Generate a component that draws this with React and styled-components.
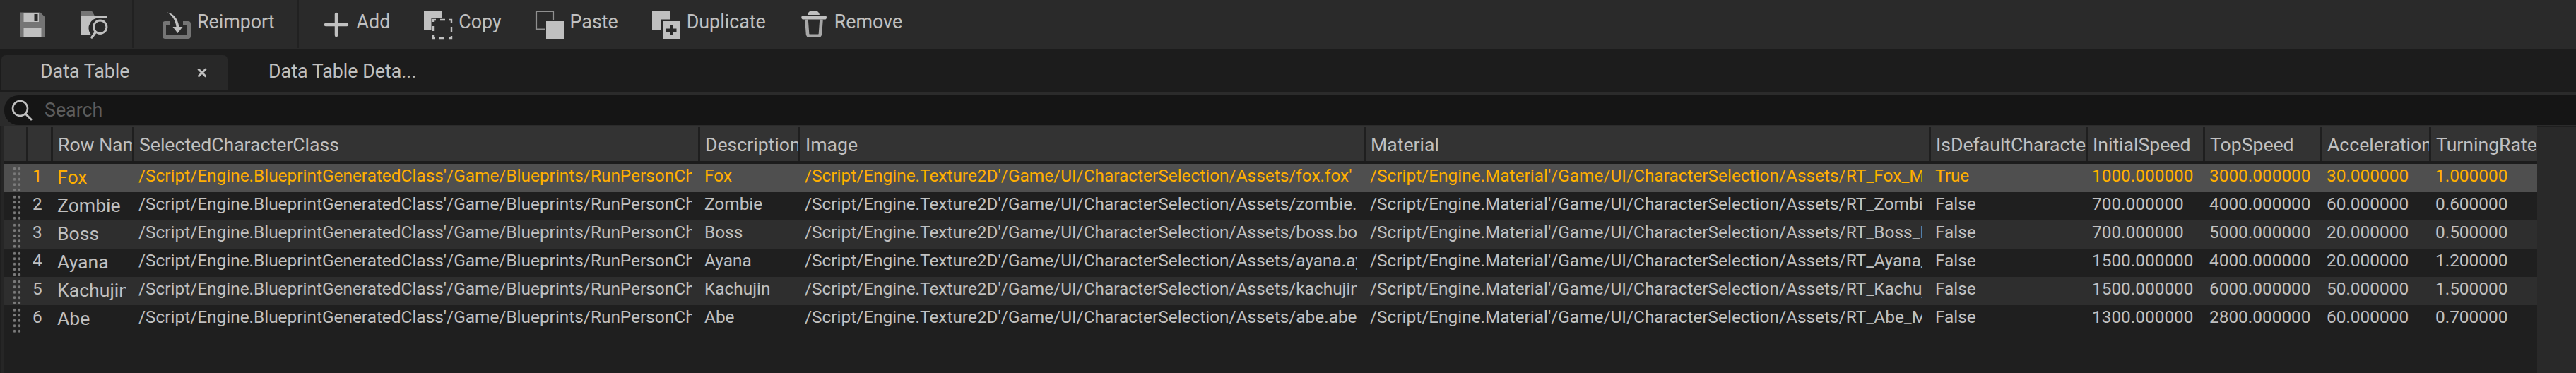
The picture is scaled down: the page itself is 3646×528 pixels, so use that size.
import React from 'react'
import styled, { createGlobalStyle } from 'styled-components'

const COLUMNS = '34px 35px 115px 801px 142px 800px 800px 222px 166px 166px 154px 150px'

const selectedClass = "/Script/Engine.BlueprintGeneratedClass'/Game/Blueprints/RunPersonCharacter.RunPersonCharacter_C'"
const imagePath = (n) => `/Script/Engine.Texture2D'/Game/UI/CharacterSelection/Assets/${n}.${n}'`
const materialPath = (n) => `/Script/Engine.Material'/Game/UI/CharacterSelection/Assets/RT_${n}_Mat.RT_${n}_Mat'`

const rows = [
    ['Fox', 'fox', 'Fox', 'True', '1000.000000', '3000.000000', '30.000000', '1.000000'],
    ['Zombie', 'zombie', 'Zombie', 'False', '700.000000', '4000.000000', '60.000000', '0.600000'],
    ['Boss', 'boss', 'Boss', 'False', '700.000000', '5000.000000', '20.000000', '0.500000'],
    ['Ayana', 'ayana', 'Ayana', 'False', '1500.000000', '4000.000000', '20.000000', '1.200000'],
    ['Kachujin', 'kachujin', 'Kachujin', 'False', '1500.000000', '6000.000000', '50.000000', '1.500000'],
    ['Abe', 'abe', 'Abe', 'False', '1300.000000', '2800.000000', '60.000000', '0.700000'],
]

const headers = ['', '', 'Row Name', 'SelectedCharacterClass', 'Description', 'Image', 'Material', 'IsDefaultCharacter', 'InitialSpeed', 'TopSpeed', 'Acceleration', 'TurningRate']

const LIGHT = '#c0c0c0'
const DIM = '#757575'
const BAR = '#2a2a2a'

const SaveIcon = () => (
    <Icon viewBox="0 0 40 40">
        <path d="M2.5 2.5H31L37.5 9V37.5H2.5Z" fill={DIM} />
        <rect x="7.5" y="3" width="21.5" height="13" fill={LIGHT} />
        <rect x="22.5" y="5" width="5" height="10" fill="#2a2a2a" />
        <rect x="7.5" y="24.5" width="25" height="12.5" fill={LIGHT} />
    </Icon>
)

const BrowseIcon = () => (
    <Icon viewBox="0 0 40 40">
        <path d="M0 7.5V2Q0 0 2 0H14Q16 0 17 2L20 7.5Z" fill={DIM} />
        <path d="M0 7.5H38V10.5H27A14.5 14.5 0 0 0 14 33L15 35H2Q0 35 0 33Z" fill={LIGHT} />
        <circle cx="27.7" cy="23.3" r="9.2" fill="none" stroke={LIGHT} strokeWidth="3" />
        <path d="M21 31L16 38" stroke={LIGHT} strokeWidth="3.4" strokeLinecap="round" />
    </Icon>
)

const ReimportIcon = () => (
    <Icon viewBox="0 0 40 40">
        <path d="M11 17.5H4Q2.5 17.5 2.5 19V36Q2.5 37.5 4 37.5H36Q37.5 37.5 37.5 36V19Q37.5 17.5 36 17.5H29" fill="none" stroke={DIM} strokeWidth="5" />
        <path d="M6.5 2.5C15 4 21.5 10 23.5 23H28.5L21.5 32L14.5 23H19.5C18.5 14 14 7 6.5 2.5Z" fill={LIGHT} />
    </Icon>
)

const AddIcon = () => (
    <Icon viewBox="0 0 40 40">
        <path d="M20 5V35M5 20H35" stroke={LIGHT} strokeWidth="4.5" strokeLinecap="round" />
    </Icon>
)

const CopyIcon = () => (
    <Icon viewBox="0 0 40 40">
        <rect x="0" y="0" width="25" height="27" fill={LIGHT} />
        <rect x="10.5" y="10.5" width="29.5" height="29.5" fill={BAR} />
        <rect x="13" y="13" width="26" height="26" fill="none" stroke={LIGHT} strokeWidth="2.4" strokeDasharray="7 6" strokeDashoffset="3" />
    </Icon>
)

const PasteIcon = () => (
    <Icon viewBox="0 0 40 40">
        <path d="M25 14V1H1V26.5H14" fill="none" stroke="#8f8f8f" strokeWidth="2.2" />
        <rect x="15" y="15" width="25" height="25" fill={LIGHT} />
    </Icon>
)

const DuplicateIcon = () => (
    <Icon viewBox="0 0 40 40">
        <rect x="0" y="0" width="25" height="27" fill={LIGHT} />
        <rect x="12.5" y="12.5" width="27.5" height="27.5" fill={BAR} />
        <rect x="15" y="15" width="25" height="25" fill={LIGHT} />
        <path d="M27.3 20.5V35M20 27.7H34.5" stroke={BAR} strokeWidth="4.6" />
    </Icon>
)

const TrashIcon = () => (
    <Icon viewBox="0 0 40 40">
        <path d="M11 6Q11.5 0 19.5 0Q27.5 0 28 6Z" fill={LIGHT} />
        <rect x="2.3" y="7" width="35.7" height="5.6" rx="2.8" fill={LIGHT} />
        <path d="M9.5 12.5L11 33Q11.2 35.7 14 35.7H26Q28.8 35.7 29 33L30.5 12.5" fill="none" stroke="#a8a8a8" strokeWidth="4.6" />
    </Icon>
)

const Tools = [
    ['Add', AddIcon],
    ['Copy', CopyIcon],
    ['Paste', PasteIcon],
    ['Duplicate', DuplicateIcon],
    ['Remove', TrashIcon],
]

function App() {
    return (
        <Page>
            <GlobalStyle />
            <Toolbar>
                <ToolGroup $left={26} $right={33}>
                    <ToolButton><SaveIcon /></ToolButton>
                    <ToolButton><BrowseIcon /></ToolButton>
                </ToolGroup>
                <Divider />
                <ToolGroup $left={40} $right={31}>
                    <ToolButton><ReimportIcon /><span>Reimport</span></ToolButton>
                </ToolGroup>
                <Divider />
                <ToolGroup $left={33} $right={0}>
                    {Tools.map(([label, Glyph]) => (
                        <ToolButton key={label}><Glyph /><span>{label}</span></ToolButton>
                    ))}
                </ToolGroup>
            </Toolbar>

            <TabStrip>
                <Tab $active>
                    <span>Data Table</span>
                    <CloseIcon viewBox="0 0 14 14">
                        <path d="M1.5 1.5L12.5 12.5M12.5 1.5L1.5 12.5" stroke={LIGHT} strokeWidth="3" />
                    </CloseIcon>
                </Tab>
                <Tab>Data Table Deta...</Tab>
            </TabStrip>

            <SearchRow>
                <SearchBox>
                    <SearchIcon viewBox="0 0 30 30">
                        <circle cx="12.5" cy="12.5" r="10.5" fill="none" stroke={LIGHT} strokeWidth="2.6" />
                        <path d="M20 20L28 28" stroke={LIGHT} strokeWidth="3" strokeLinecap="round" />
                    </SearchIcon>
                    <SearchText>Search</SearchText>
                </SearchBox>
            </SearchRow>

            <TableArea>
                <EdgeStrip />
                <Table>
                    <HeaderRow>
                        {headers.map((h, i) => (
                            <HeaderCell key={i}>{h}</HeaderCell>
                        ))}
                    </HeaderRow>
                    {rows.map(([name, file, mat, isDefault, initial, top, accel, turning], i) => (
                        <Row key={name} $selected={i === 0} $striped={i % 2 === 0}>
                            <GripCell><Grip /></GripCell>
                            <Cell>{i + 1}</Cell>
                            <NameCell>{name}</NameCell>
                            <Cell>{selectedClass}</Cell>
                            <Cell>{name}</Cell>
                            <Cell>{imagePath(file)}</Cell>
                            <Cell>{materialPath(mat)}</Cell>
                            <Cell>{isDefault}</Cell>
                            <Cell>{initial}</Cell>
                            <Cell>{top}</Cell>
                            <Cell>{accel}</Cell>
                            <Cell>{turning}</Cell>
                        </Row>
                    ))}
                </Table>
                <ScrollTrack />
            </TableArea>
        </Page>
    )
}

export default App

const GlobalStyle = createGlobalStyle`
    html, body {
        margin: 0;
        padding: 0;
        background: #1f1f1f;
    }
`

const Page = styled.div`
    width: 3646px;
    height: 528px;
    overflow: hidden;
    display: flex;
    flex-direction: column;
    font-family: Roboto, "Liberation Sans", sans-serif;
    color: #c0c0c0;
    background: #1f1f1f;
`

const Toolbar = styled.div`
    height: 70px;
    flex: none;
    display: flex;
    align-items: stretch;
    background: ${BAR};
    font-size: 26.8px;
`

const ToolGroup = styled.div`
    display: flex;
    align-items: center;
    gap: 48px;
    padding: 0 ${(p) => p.$right}px 0 ${(p) => p.$left}px;
    height: 70px;
`

const ToolButton = styled.div`
    display: flex;
    align-items: center;
    gap: 9px;

    span {
        position: relative;
        top: -4px;
    }
`

const Icon = styled.svg`
    width: 40px;
    height: 40px;
    flex: none;
    overflow: visible;
`

const Divider = styled.div`
    width: 3px;
    height: 68px;
    flex: none;
    background: #212121;
`

const TabStrip = styled.div`
    height: 58px;
    flex: none;
    display: flex;
    align-items: flex-end;
    padding: 0 0 2px 2px;
    background: #1c1c1c;
    font-size: 26.8px;
`

const Tab = styled.div`
    width: ${(p) => (p.$active ? '320px' : 'auto')};
    height: 50px;
    box-sizing: border-box;
    display: flex;
    align-items: center;
    justify-content: space-between;
    padding: 0 29px 4px ${(p) => (p.$active ? '55px' : '58px')};
    border-radius: 6px 6px 0 0;
    background: ${(p) => (p.$active ? '#282828' : 'transparent')};
`

const CloseIcon = styled.svg`
    width: 14px;
    height: 14px;
    margin-top: 3px;
`

const SearchRow = styled.div`
    height: 48px;
    flex: none;
    box-sizing: border-box;
    padding: 5px 0 1px 6px;
    background: #2b2b2b;
`

const SearchBox = styled.div`
    height: 42px;
    display: flex;
    align-items: center;
    padding-left: 10px;
    border-radius: 20px 0 0 20px;
    background: #151515;
`

const SearchIcon = styled.svg`
    width: 30px;
    height: 30px;
    flex: none;
`

const SearchText = styled.span`
    margin-left: 17px;
    font-size: 26.8px;
    color: #5c5c5c;
`

const TableArea = styled.div`
    flex: 1;
    display: flex;
    min-height: 0;
`

const EdgeStrip = styled.div`
    width: 4px;
    flex: none;
    margin-left: 2px;
    background: #262626;
`

const Table = styled.div`
    width: 3585px;
    flex: none;
    display: flex;
    flex-direction: column;
    background: #1f1f1f;
`

const ScrollTrack = styled.div`
    flex: 1;
    margin-top: 2px;
    background: #292929;
`

const HeaderRow = styled.div`
    height: 50px;
    flex: none;
    display: grid;
    grid-template-columns: ${COLUMNS};
    margin-bottom: 4px;
    background: #333333;
    box-shadow: 0 4px 0 #1c1c1c;
`

const HeaderCell = styled.div`
    min-width: 0;
    display: flex;
    align-items: center;
    padding-left: 7px;
    margin-top: 2px;
    overflow: hidden;
    white-space: nowrap;
    font-size: 26.6px;
    border-right: 3px solid #1f1f1f;
    box-sizing: border-box;

    &:last-child {
        border-right: none;
    }
`

const Row = styled.div`
    height: 40px;
    flex: none;
    display: grid;
    grid-template-columns: ${COLUMNS};
    align-items: center;
    background: ${(p) => (p.$selected ? '#4f4f4f' : p.$striped ? '#2e2e2e' : '#1f1f1f')};
    color: ${(p) => (p.$selected ? '#ffb000' : '#c0c0c0')};
`

const Cell = styled.div`
    min-width: 0;
    height: 40px;
    box-sizing: border-box;
    line-height: 34px;
    padding-left: 6px;
    margin-right: 12px;
    overflow: hidden;
    white-space: nowrap;
    font-size: 24.4px;
`

const NameCell = styled(Cell)`
    line-height: 38px;
    font-size: 26.6px;
`

const GripCell = styled.div`
    display: flex;
    align-items: flex-start;
    height: 40px;
    padding: 3px 0 0 11px;
    box-sizing: border-box;
`

const Grip = styled.div`
    width: 14px;
    height: 37.5px;
    background: radial-gradient(circle, #7a7a7a 1.6px, transparent 2.1px) 0 0 / 7px 7.5px;
`
